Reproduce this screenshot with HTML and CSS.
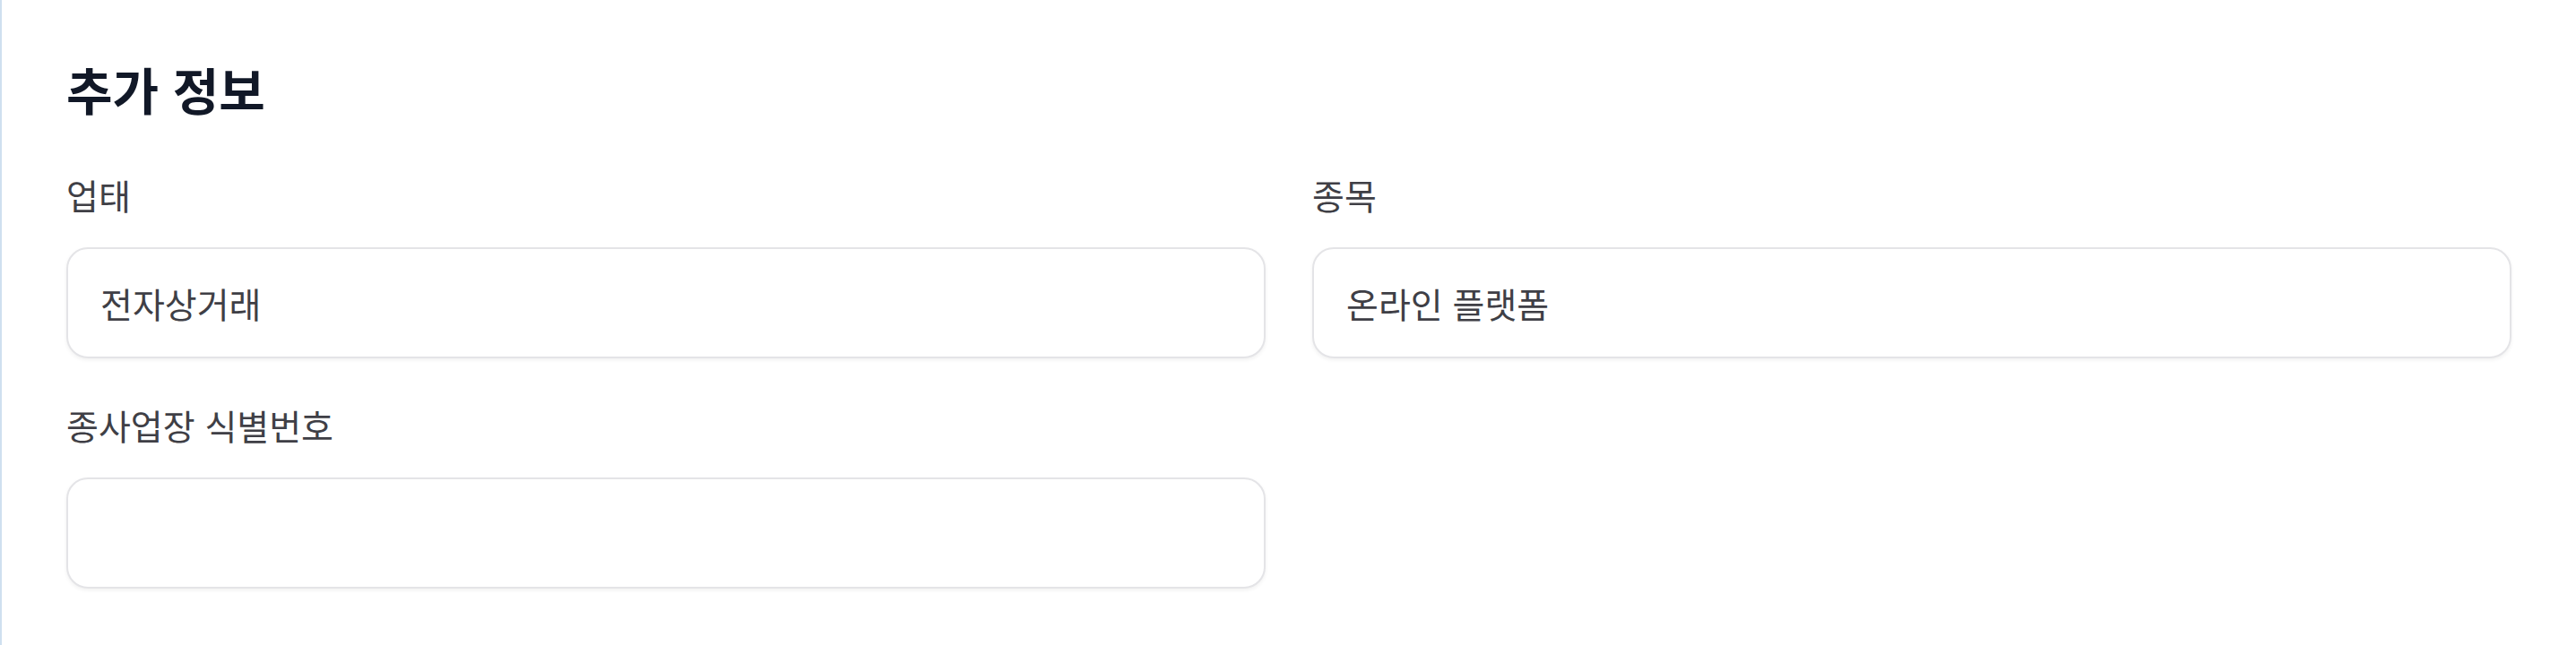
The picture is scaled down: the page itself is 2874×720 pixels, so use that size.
FILE: index.html
```html
<!DOCTYPE html>
<html lang="ko">
<head>
<meta charset="utf-8">
<title>추가 정보</title>
<link rel="stylesheet" href="styles.css">
</head>
<body>
<section class="panel">
  <h2 class="title">추가 정보</h2>
  <div class="grid">
    <div class="field">
      <label class="label" for="f1">업태</label>
      <input class="input" id="f1" type="text" value="전자상거래">
    </div>
    <div class="field">
      <label class="label" for="f2">종목</label>
      <input class="input" id="f2" type="text" value="온라인 플랫폼">
    </div>
    <div class="field">
      <label class="label" for="f3">종사업장 식별번호</label>
      <input class="input" id="f3" type="text" value="">
    </div>
  </div>
</section>
</body>
</html>
```

FILE: styles.css
```css
html, body {
  margin: 0;
  padding: 0;
  background: #ffffff;
}

body {
  font-family: "Noto Sans CJK KR", "Noto Sans", sans-serif;
}

.panel {
  box-sizing: border-box;
  min-height: 720px;
  border-left: 2px solid #cfe0ef;
  padding: 57px 72px 0 72px;
}

.title {
  margin: 0;
  font-size: 56px;
  line-height: 84px;
  font-weight: 700;
  color: #111827;
}

.grid {
  display: grid;
  grid-template-columns: 1fr 1fr;
  column-gap: 52px;
  row-gap: 47px;
  margin-top: 49px;
}

.field {
  display: flex;
  flex-direction: column;
  gap: 32px;
}

.label {
  font-size: 39px;
  line-height: 54px;
  color: #3f3f46;
}

.input {
  box-sizing: border-box;
  width: 100%;
  height: 124px;
  padding: 0 36px;
  border: 2px solid #e4e4e7;
  border-radius: 24px;
  background: #ffffff;
  box-shadow: 0 2px 4px rgba(0, 0, 0, 0.06);
  font-family: "Noto Sans CJK KR", "Noto Sans", sans-serif;
  font-size: 39px;
  color: #3f3f46;
  outline: none;
}
```
